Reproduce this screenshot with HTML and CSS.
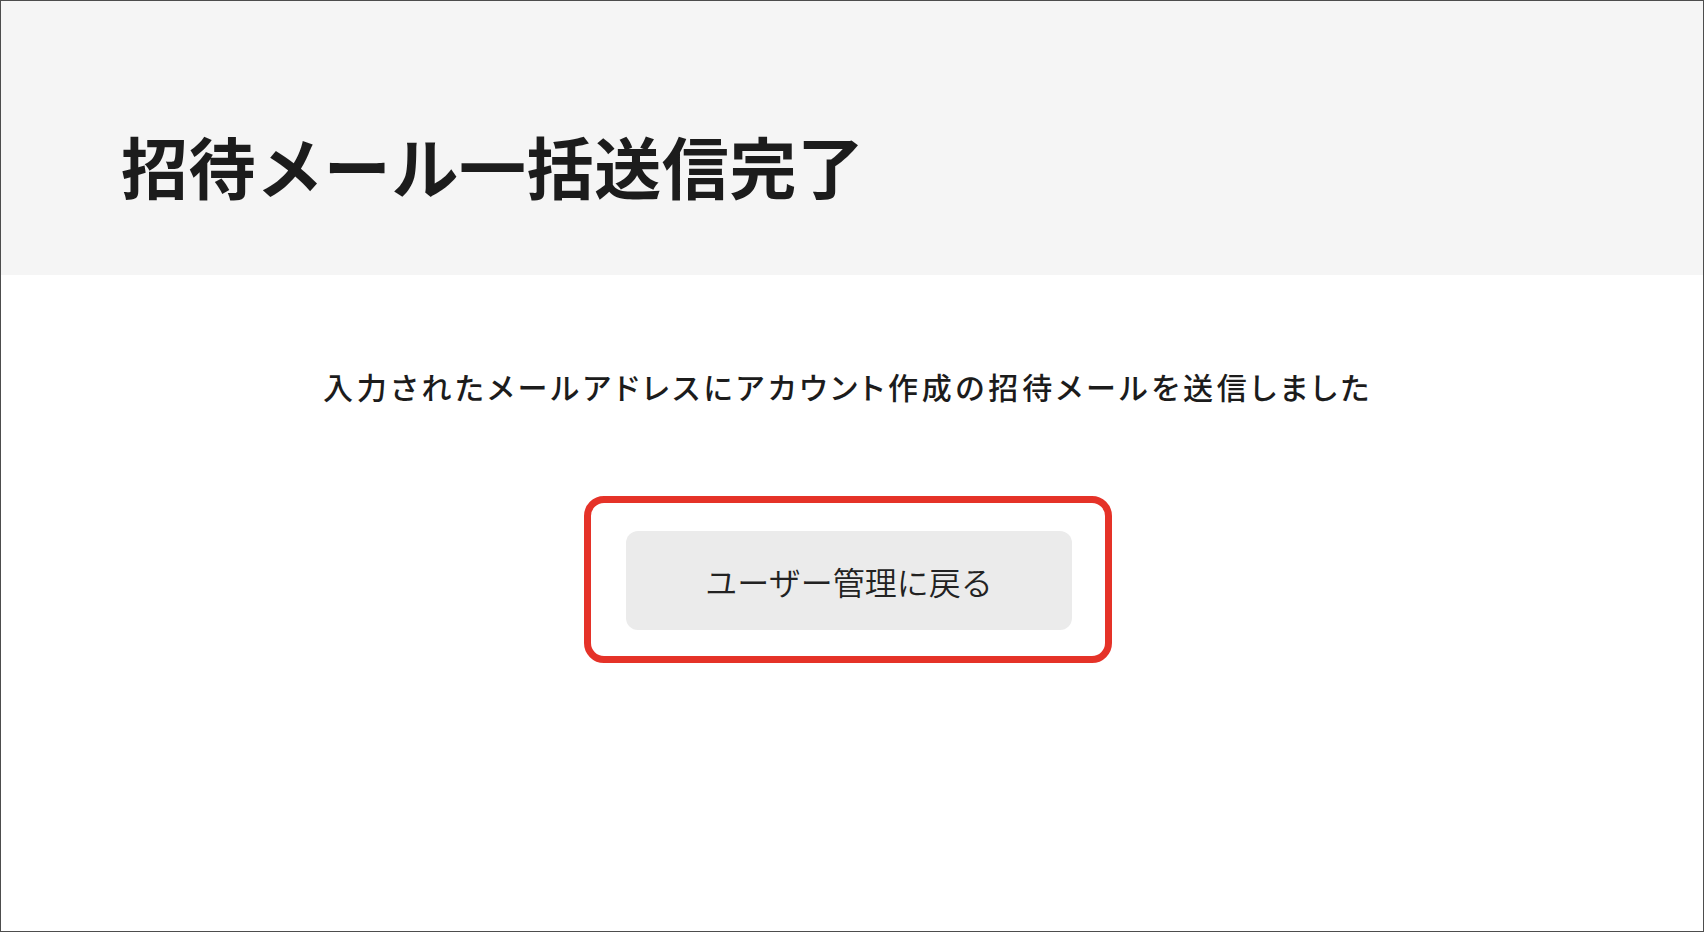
FILE: index.html
```html
<!DOCTYPE html>
<html lang="ja">
<head>
    <meta charset="UTF-8">
    <meta name="viewport" content="width=device-width, initial-scale=1.0">
    <title>招待メール一括送信完了</title>
    <link rel="stylesheet" href="styles.css">
</head>
<body>
    <div class="page">
        <header class="page-header">
            <h1>招待メール一括送信完了</h1>
        </header>
        <main class="page-body">
            <p class="message">入力されたメールアドレスにアカウント作成の招待メールを送信しました</p>
            <div class="highlight">
                <a class="back-button" href="#">ユーザー管理に戻る</a>
            </div>
        </main>
    </div>
</body>
</html>
```

FILE: styles.css
```css
body {
    margin: 0;
    font-family: "Noto Sans CJK JP", "Noto Sans", sans-serif;
    color: #1c1c1c;
    background-color: white;
}
.page {
    height: 932px;
    box-sizing: border-box;
    border: 1px solid #4d4d4d;
    display: flex;
    flex-direction: column;
}
.page-header {
    height: 274px;
    box-sizing: border-box;
    padding: 130px 0 0 120px;
    background-color: #f5f5f5;
}
.page-header h1 {
    margin: 0;
    font-size: 67px;
    line-height: 1;
    font-weight: 700;
    letter-spacing: 0.6px;
}
.page-body {
    display: flex;
    flex-direction: column;
    align-items: center;
    padding: 90px 8px 0 0;
}
.message {
    margin: 0;
    font-size: 30px;
    line-height: 42px;
    font-weight: 500;
    letter-spacing: 3.85px;
    font-feature-settings: "palt";
}
.highlight {
    margin-top: 89px;
    padding: 28px 33px 26px 35px;
    border: 7px solid #e53228;
    border-radius: 20px;
}
.back-button {
    display: flex;
    align-items: center;
    justify-content: center;
    width: 446px;
    height: 99px;
    background-color: #ebebeb;
    border-radius: 12px;
    color: #222;
    text-decoration: none;
    font-size: 32px;
    font-weight: 350;
}
```
